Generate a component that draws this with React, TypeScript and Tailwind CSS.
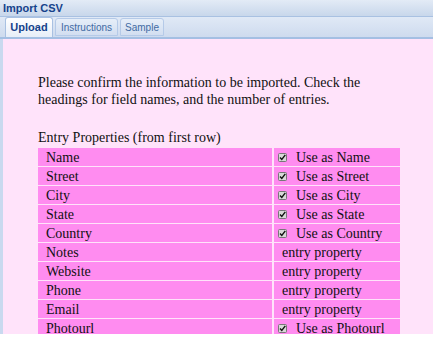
import React from 'react';

const rows: { name: string; use?: string }[] = [
  { name: 'Name', use: 'Name' },
  { name: 'Street', use: 'Street' },
  { name: 'City', use: 'City' },
  { name: 'State', use: 'State' },
  { name: 'Country', use: 'Country' },
  { name: 'Notes' },
  { name: 'Website' },
  { name: 'Phone' },
  { name: 'Email' },
  { name: 'Photourl', use: 'Photourl' },
];

const Check = () => (
  <svg width="9" height="9" viewBox="0 0 9 9" className="shrink-0">
    <rect x="0.5" y="0.5" width="8" height="8" rx="1" fill="#d8d8d8" stroke="#777" />
    <path d="M2 4.5 L3.8 6.5 L7.3 1.8" fill="none" stroke="#111" strokeWidth="1.4" />
  </svg>
);

export default function App() {
  return (
    <div className="w-[433px] h-[341px] bg-white overflow-hidden">
      <div className="h-[334px] flex flex-col">
        {/* title bar */}
        <div className="h-[17px] shrink-0 bg-gradient-to-b from-[#e3ebf6] to-[#c8d7eb] border-b border-[#a9c1e2] flex items-center px-[3px] text-[11px] font-bold text-[#15428b] font-['Liberation_Sans',sans-serif]">
          Import CSV
        </div>
        {/* tab strip */}
        <div className="h-[22px] shrink-0 bg-gradient-to-b from-[#e0e9f6] to-[#cedbee] border-b-[2px] border-[#a4bfe3] flex items-end pl-[5px] gap-[2px] text-[10px] font-['Liberation_Sans',sans-serif]">
          <div className="h-[20px] w-[48px] bg-gradient-to-b from-white to-[#e7eef8] border border-b-0 border-[#a9c1e2] rounded-t-[3px] flex items-center justify-center font-bold text-[11px] text-[#15428b]">
            Upload
          </div>
          <div className="h-[18px] w-[63px] mb-[1px] bg-gradient-to-b from-[#e6eef8] to-[#d2def0] border border-[#b5cae8] rounded-t-[3px] flex items-center justify-center text-[#416aa3]">
            Instructions
          </div>
          <div className="h-[18px] w-[44px] mb-[1px] bg-gradient-to-b from-[#e6eef8] to-[#d2def0] border border-[#b5cae8] rounded-t-[3px] flex items-center justify-center text-[#416aa3]">
            Sample
          </div>
        </div>
        {/* body */}
        <div className="flex-1 overflow-hidden bg-[#ffe3fa] border-l-[3px] border-[#c9d9ef] pl-[35px] pt-[35px] font-['Liberation_Serif',serif] text-[14px] leading-[17px] text-[#111]">
          <p className="w-[360px]">
            Please confirm the information to be imported. Check the headings for field names, and the number of entries.
          </p>
          <div className="mt-[21px] h-[17px]">Entry Properties (from first row)</div>
          <div className="mt-[2px] grid grid-cols-[234px_126px] gap-x-[2px] gap-y-[1px]">
            {rows.map((r) => (
              <React.Fragment key={r.name}>
                <div className="h-[18px] bg-[#ff8cf0] pl-[8px] flex items-center">{r.name}</div>
                <div className="h-[18px] bg-[#ff8cf0] flex items-center">
                  {r.use ? (
                    <>
                      <span className="ml-[4px]"><Check /></span>
                      <span className="ml-[9px]">Use as {r.use}</span>
                    </>
                  ) : (
                    <span className="ml-[8px]">entry property</span>
                  )}
                </div>
              </React.Fragment>
            ))}
          </div>
        </div>
      </div>
    </div>
  );
}
